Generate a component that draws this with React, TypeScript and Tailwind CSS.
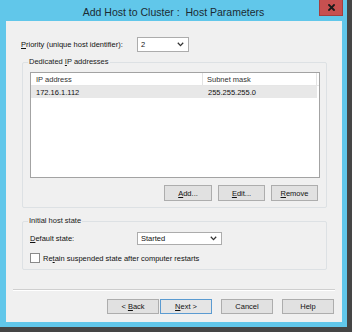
import React from "react";

function U({ children }: { children: React.ReactNode }) {
  return <span className="underline underline-offset-[1px]">{children}</span>;
}

function Chevron() {
  return (
    <svg width="7" height="5" viewBox="0 0 7 5" className="shrink-0">
      <polyline points="0.8,0.8 3.5,3.6 6.2,0.8" fill="none" stroke="#333" strokeWidth="1.3" />
    </svg>
  );
}

function Combo({ value, w, h }: { value: string; w: string; h: string }) {
  return (
    <div
      className={`${w} ${h} bg-white border border-[#acacac] flex items-center justify-between pl-[3px] pr-[4px] text-[#111]`}
    >
      <span>{value}</span>
      <Chevron />
    </div>
  );
}

function Btn({
  children,
  primary,
  w = "w-[47px]",
  h = "h-[16px]",
}: {
  children: React.ReactNode;
  primary?: boolean;
  w?: string;
  h?: string;
}) {
  return (
    <div
      className={`${w} ${h} flex items-center justify-center border whitespace-pre ${
        primary ? "border-[#5b9bd1] bg-[#e5e5e5]" : "border-[#adadad] bg-[#e1e1e1]"
      } text-[#111]`}
    >
      {children}
    </div>
  );
}

function Group({
  label,
  className,
  children,
}: {
  label: React.ReactNode;
  className: string;
  children: React.ReactNode;
}) {
  return (
    <div className={`relative ml-[16px] w-[305px] border border-[#dde1e4] rounded-[2px] ${className}`}>
      <span className="absolute left-[5px] top-[-6px] px-[1px] bg-[#f0f0f0] text-[#1a1a1a] leading-[10px]">
        {label}
      </span>
      {children}
    </div>
  );
}

export default function App() {
  return (
    <div className="w-[352px] h-[332px] bg-[#454545] font-['Liberation_Sans',Arial,sans-serif] text-[7.5px] leading-[9px]">
      <div className="w-[347px] h-[327px] bg-[#61c7ea] flex flex-col">
        {/* Title bar */}
        <div className="relative h-[21px] shrink-0 flex items-center justify-center pt-[3px]">
          <span className="text-[10.5px] leading-[12px] text-[#1b2b33] whitespace-pre">
            Add Host to Cluster :  Host Parameters
          </span>
          <div className="absolute right-[4px] top-0 w-[24px] h-[16px] bg-[#c75050] border border-[#a43f3f] border-t-0 flex items-center justify-center">
            <svg width="7" height="7" viewBox="0 0 7 7">
              <path d="M1 1 L6 6 M6 1 L1 6" stroke="#1a1a1a" strokeWidth="1.8" strokeLinecap="square" />
            </svg>
          </div>
        </div>

        {/* Client area */}
        <div className="ml-[6px] mr-[5px] mb-[5px] flex-1 bg-[#f0f0f0] flex flex-col text-[#111]">
          <div className="mt-[16px] pl-[15px] flex items-center h-[15px]">
            <span className="w-[116px]">
              <U>P</U>riority (unique host identifier):
            </span>
            <Combo value="2" w="w-[52px]" h="h-[15px]" />
          </div>

          <Group
            label={
              <>
                Dedicated <U>I</U>P addresses
              </>
            }
            className="mt-[10px] pt-[9px] pl-[7px] pb-[6px]"
          >
            <div className="w-[290px] h-[106px] bg-white border border-[#a3a3a3] flex flex-col">
              <div className="h-[13px] flex border-b border-[#e6e6e6] text-[#333]">
                <div className="w-[172px] pl-[5px] flex items-center border-r border-[#e3e3e3]">IP address</div>
                <div className="w-[114px] pl-[4px] flex items-center border-r border-[#e3e3e3]">Subnet mask</div>
              </div>
              <div className="h-[12px] w-[286px] flex bg-[#e8e8e8]">
                <div className="w-[172px] pl-[5px] flex items-center">172.16.1.112</div>
                <div className="w-[114px] pl-[5px] flex items-center">255.255.255.0</div>
              </div>
            </div>
            <div className="mt-[7px] w-[288px] flex justify-end gap-[6px]">
              <Btn w="w-[48px]">
                <U>A</U>dd...
              </Btn>
              <Btn>
                <U>E</U>dit...
              </Btn>
              <Btn>
                <U>R</U>emove
              </Btn>
            </div>
          </Group>

          <Group label="Initial host state" className="mt-[13px] pt-[10px] pl-[7px] pb-[6px]">
            <div className="flex items-center h-[13px]">
              <span className="w-[107px]">
                <U>D</U>efault state:
              </span>
              <Combo value="Started" w="w-[85px]" h="h-[13px]" />
            </div>
            <div className="mt-[8px] flex items-center h-[10px] gap-[3px]">
              <div className="w-[10px] h-[10px] bg-white border border-[#8a8a8a]" />
              <span>
                Re<U>t</U>ain suspended state after computer restarts
              </span>
            </div>
          </Group>

          <div className="mt-[19px] mx-[7px] h-[2px] border-t border-[#cfcfcf] border-b border-b-white" />

          <div className="mt-[8px] pr-[8px] flex justify-end">
            <Btn w="w-[52px]" h="h-[15px]">
              {"< "}
              <U>B</U>ack
            </Btn>
            <div className="ml-[1px]">
              <Btn w="w-[52px]" h="h-[15px]" primary>
                <U>N</U>ext{" >"}
              </Btn>
            </div>
            <div className="ml-[9px]">
              <Btn w="w-[52px]" h="h-[15px]">
                Cancel
              </Btn>
            </div>
            <div className="ml-[9px]">
              <Btn w="w-[52px]" h="h-[15px]">
                Help
              </Btn>
            </div>
          </div>
        </div>
      </div>
    </div>
  );
}
